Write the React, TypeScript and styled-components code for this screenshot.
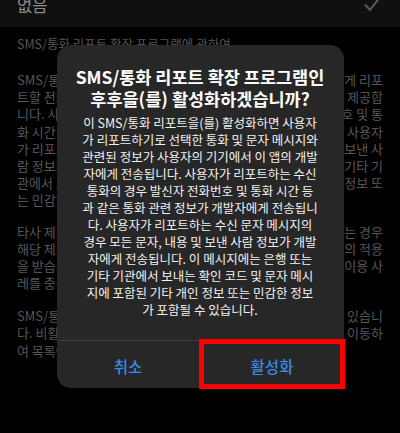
import React from "react";
import styled, { createGlobalStyle } from "styled-components";

const GlobalStyle = createGlobalStyle`
  html, body {
    margin: 0;
    padding: 0;
    background: #000000;
  }
  body {
    font-family: "Noto Sans CJK KR", "Noto Sans", sans-serif;
    -webkit-font-smoothing: antialiased;
  }
`;

const Screen = styled.div`
  position: relative;
  width: 400px;
  height: 433px;
  overflow: hidden;
  background: #000000;
`;

const ListRow = styled.div`
  display: flex;
  align-items: center;
  justify-content: space-between;
  height: 44px;
  margin-top: -17px;
  padding: 0 20px 0 17px;
  background: #1c1c1e;
`;

const RowLabel = styled.span`
  font-size: 16.5px;
  color: #e6e6ea;
`;

const Section = styled.div`
  padding: 8px 17px 0 17px;
  color: #8e8e93;
`;

const SectionHeader = styled.div`
  font-size: 12.5px;
  line-height: 17px;
`;

const Paragraph = styled.div<{ $gap: number }>`
  margin-top: ${(p) => p.$gap}px;
  font-size: 13px;
`;

const Line = styled.div`
  display: flex;
  justify-content: space-between;
  height: 17.2px;
  line-height: 17.2px;
  white-space: nowrap;
`;

const Backdrop = styled.div`
  position: absolute;
  inset: 0;
  display: flex;
  align-items: center;
  justify-content: center;
  background: rgba(0, 0, 0, 0.4);
`;

const Alert = styled.div`
  width: 287px;
  background: #272727;
  border-radius: 14px;
  color: #ffffff;
  text-align: center;
`;

const AlertContent = styled.div`
  padding: 21px 10px 22px 10px;
`;

const Title = styled.div`
  font-size: 17.5px;
  font-weight: 700;
  line-height: 22px;
`;

const Message = styled.div`
  margin-top: 4px;
  font-size: 12.5px;
  line-height: 17px;
  color: #f2f2f2;
`;

const TextLine = styled.div`
  white-space: nowrap;
`;

const ButtonRow = styled.div`
  display: flex;
  height: 47px;
  border-top: 1px solid #3d3d3f;
`;

const AlertButton = styled.button<{ $divider?: boolean }>`
  position: relative;
  flex: 1;
  border: none;
  background: transparent;
  padding: 3px 0 0 0;
  font-family: inherit;
  font-size: 15.5px;
  font-weight: 500;
  color: #3b87e8;
  border-left: ${(p) => (p.$divider ? "1px solid #3d3d3f" : "none")};
`;

const Highlight = styled.span`
  position: absolute;
  top: -2px;
  left: -2px;
  right: -1px;
  bottom: -1px;
  border: 5px solid #ff0000;
  pointer-events: none;
`;

const CheckIcon = () => (
  <svg width="16" height="14" viewBox="0 0 16 14" fill="none">
    <polyline
      points="1.5,7 6,12 14.5,1"
      stroke="#9a9aa0"
      strokeWidth="2"
      strokeLinecap="round"
      strokeLinejoin="round"
    />
  </svg>
);

const about = [
  [
    ["SMS/통화 리포트 확장", "앱 개발자에게 리포"],
    ["트할 전화번호와 메시", "선택하는 기능을 제공합"],
    ["니다. 사용자가 리포트", "수신 통화 번호 및 통"],
    ["화 시간 등의 정보가", "기기에서 전송되며 사용자"],
    ["가 리포트하는 문자", "내용 및 보낸 사"],
    ["람 정보와 은행 또는", "기타 기"],
    ["관에서 보내는 확인", "개인 정보 또"],
    ["는 민감한 정보가 포함될 수 있습니다.", ""],
  ],
  [
    ["타사 제공 확장 프로그램", "활성화하는 경우"],
    ["해당 제공자의 개인정보", "처리방침의 적용"],
    ["을 받습니다. 개발자의", "데이터 이용 사"],
    ["레를 충분히 확인하십시오.", ""],
  ],
  [
    ["SMS/통화 리포트 확장", "비활성화할 수 있습니"],
    ["다. 비활성화하려면", "설정으로 이동하"],
    ["여 목록에서 해당 앱을 끄십시오.", ""],
  ],
];

const message = [
  "이 SMS/통화 리포트을(를) 활성화하면 사용자",
  "가 리포트하기로 선택한 통화 및 문자 메시지와",
  "관련된 정보가 사용자의 기기에서 이 앱의 개발",
  "자에게 전송됩니다. 사용자가 리포트하는 수신",
  "통화의 경우 발신자 전화번호 및 통화 시간 등",
  "과 같은 통화 관련 정보가 개발자에게 전송됩니",
  "다. 사용자가 리포트하는 수신 문자 메시지의",
  "경우 모든 문자, 내용 및 보낸 사람 정보가 개발",
  "자에게 전송됩니다. 이 메시지에는 은행 또는",
  "기타 기관에서 보내는 확인 코드 및 문자 메시",
  "지에 포함된 기타 개인 정보 또는 민감한 정보",
  "가 포함될 수 있습니다.",
];

const paragraphGaps = [19, 14, 16];

const App = () => {
  return (
    <>
      <GlobalStyle />
      <Screen>
        <ListRow>
          <RowLabel>없음</RowLabel>
          <CheckIcon />
        </ListRow>
        <Section>
          <SectionHeader>SMS/통화 리포트 확장 프로그램에 관하여</SectionHeader>
          {about.map((lines, i) => (
            <Paragraph key={i} $gap={paragraphGaps[i]}>
              {lines.map(([start, end], j) => (
                <Line key={j}>
                  <span>{start}</span>
                  <span>{end}</span>
                </Line>
              ))}
            </Paragraph>
          ))}
        </Section>
        <Backdrop>
          <Alert>
            <AlertContent>
              <Title>
                <TextLine>SMS/통화 리포트 확장 프로그램인</TextLine>
                <TextLine>후후을(를) 활성화하겠습니까?</TextLine>
              </Title>
              <Message>
                {message.map((line, i) => (
                  <TextLine key={i}>{line}</TextLine>
                ))}
              </Message>
            </AlertContent>
            <ButtonRow>
              <AlertButton>취소</AlertButton>
              <AlertButton $divider>
                활성화
                <Highlight />
              </AlertButton>
            </ButtonRow>
          </Alert>
        </Backdrop>
      </Screen>
    </>
  );
};

export default App;
